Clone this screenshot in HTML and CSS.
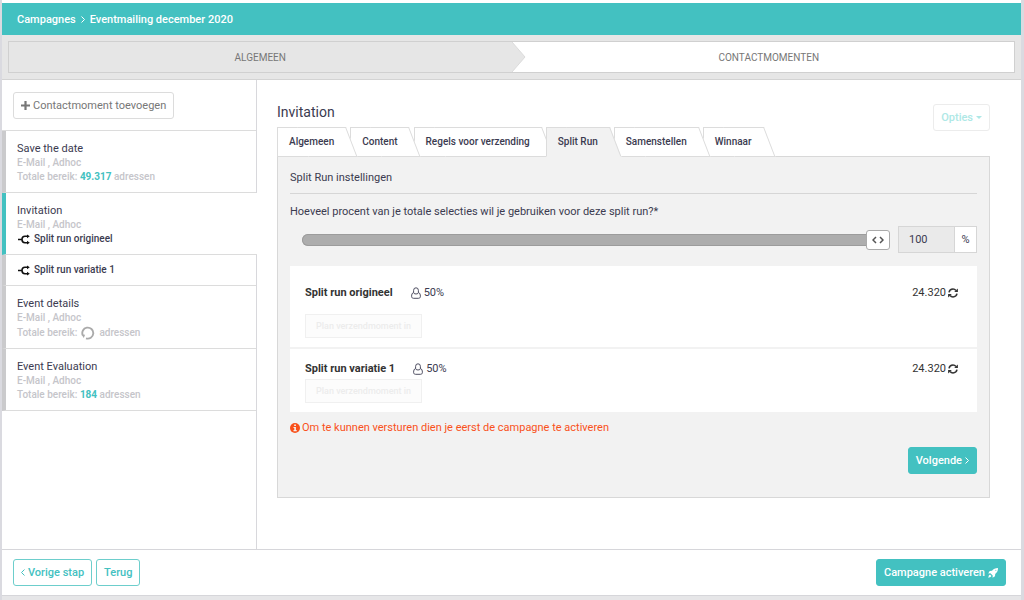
FILE: index.html
```html
<!DOCTYPE html>
<html lang="nl">
<head>
<meta charset="utf-8">
<meta name="viewport" content="width=device-width, initial-scale=1">
<title>Eventmailing december 2020</title>
<link rel="stylesheet" href="styles.css">
</head>
<body>
<svg class="defs" aria-hidden="true">
  <symbol id="split" viewBox="0 0 12 11"><path d="M0 5.500h4C4 3.400 5 2.300 7 2.300h3M4 5.500C4 7.600 5 8.700 7 8.700h3" fill="none" stroke="currentColor" stroke-width="1.600"/><path d="M9 .4 11.800 2.300 9 4.200zM9 6.800 11.800 8.700 9 10.600z" fill="currentColor"/></symbol>
  <symbol id="user" viewBox="0 0 10 12"><path d="M2.600 5.400V3.400a2.400 2.600 0 0 1 4.800 0v2a2.400 1.600 0 0 1-4.800 0z" fill="none" stroke="currentColor" stroke-width=".9"/><path d="M2.600 5.200C1.200 6 .6 7.600.6 9.300c0 1.500.9 2 2 2h4.800c1.100 0 2-.5 2-2 0-1.700-.6-3.300-2-4.100" fill="none" stroke="currentColor" stroke-width=".9"/></symbol>
  <symbol id="sync" viewBox="0 0 10 10"><path d="M1 4.300C1.400 2.200 3 1.100 5 1.100c1.300 0 2.300.5 3 1.300M9 5.700C8.600 7.800 7 8.900 5 8.900c-1.300 0-2.300-.5-3-1.300" fill="none" stroke="currentColor" stroke-width="1.500"/><path d="M9.900.4v3.700H6.200zM.1 9.600V5.900h3.700z" fill="currentColor"/></symbol>
</svg>

<div class="app">
  <header class="crumbs">
    <a href="#">Campagnes</a>
    <svg width="4" height="7" viewBox="0 0 4 7"><path d="M.5.5 3.500 3.500.5 6.500" fill="none" stroke="currentColor"/></svg>
    <a href="#">Eventmailing december 2020</a>
  </header>

  <nav class="steps-band">
    <div class="steps">
      <a class="step done" href="#">ALGEMEEN
        <svg class="arrow" viewBox="0 0 14 31" preserveAspectRatio="none"><path d="M0 0 13 15.500 0 31z" fill="#e6e6e6"/><path d="M0 0 13 15.500 0 31" fill="none" stroke="#dadada"/></svg>
      </a>
      <a class="step current" href="#">CONTACTMOMENTEN</a>
    </div>
  </nav>

  <div class="columns">
    <aside class="sidebar">
      <div class="add-row">
        <button class="btn btn-plain" type="button"><svg width="9" height="9" viewBox="0 0 9 9"><path d="M4.500 0v9M0 4.500h9" stroke="currentColor" stroke-width="2.200"/></svg>Contactmoment toevoegen</button>
      </div>
      <a class="moment" href="#">
        <span class="name">Save the date</span>
        <span>E-Mail , Adhoc</span>
        <span>Totale bereik: <b>49.317</b> adressen</span>
      </a>
      <a class="moment active" href="#">
        <span class="name">Invitation</span>
        <span>E-Mail , Adhoc</span>
        <span class="run"><svg width="12" height="11"><use href="#split"/></svg>Split run origineel</span>
      </a>
      <a class="moment variant" href="#">
        <span class="run"><svg width="12" height="11"><use href="#split"/></svg>Split run variatie 1</span>
      </a>
      <a class="moment" href="#">
        <span class="name">Event details</span>
        <span>E-Mail , Adhoc</span>
        <span class="loading">Totale bereik: <svg width="14" height="14" viewBox="0 0 14 14"><path d="M1.800 9.400A5.500 5.500 0 1 1 5 12.300" fill="none" stroke="#aaa" stroke-width="1.900"/><path d="M.5 8.500l3.600.3-1.300 3.200z" fill="#aaa"/></svg> adressen</span>
      </a>
      <a class="moment" href="#">
        <span class="name">Event Evaluation</span>
        <span>E-Mail , Adhoc</span>
        <span>Totale bereik: <b>184</b> adressen</span>
      </a>
    </aside>

    <main class="content">
      <div class="title-row">
        <h1>Invitation</h1>
        <button class="btn btn-options" type="button">Opties<svg width="6" height="3" viewBox="0 0 6 3"><path d="M0 0h6L3 3z" fill="currentColor"/></svg></button>
      </div>
      <div class="tabs" role="tablist">
        <button class="tab" role="tab" type="button">Algemeen</button>
        <button class="tab" role="tab" type="button">Content</button>
        <button class="tab" role="tab" type="button">Regels voor verzending</button>
        <button class="tab selected" role="tab" type="button" aria-selected="true">Split Run</button>
        <button class="tab" role="tab" type="button">Samenstellen</button>
        <button class="tab" role="tab" type="button">Winnaar</button>
      </div>
      <section class="panel">
        <h2>Split Run instellingen</h2>
        <label class="question" for="share">Hoeveel procent van je totale selecties wil je gebruiken voor deze split run?*</label>
        <div class="share-row">
          <input class="slider" id="share" type="range" min="0" max="100" value="100">
          <div class="amount">
            <input type="text" value="100" aria-label="Percentage" readonly>
            <span>%</span>
          </div>
        </div>

        <div class="runs">
          <article class="run-card original">
            <div class="run-head">
              <strong>Split run origineel</strong>
              <span class="portion"><svg width="10" height="12"><use href="#user"/></svg>50%</span>
              <span class="count">24.320<svg width="10" height="10"><use href="#sync"/></svg></span>
            </div>
            <button class="plan" type="button" disabled>Plan verzendmoment in</button>
          </article>
          <article class="run-card">
            <div class="run-head">
              <strong>Split run variatie 1</strong>
              <span class="portion"><svg width="10" height="12"><use href="#user"/></svg>50%</span>
              <span class="count">24.320<svg width="10" height="10"><use href="#sync"/></svg></span>
            </div>
            <button class="plan" type="button" disabled>Plan verzendmoment in</button>
          </article>
        </div>

        <p class="notice"><svg width="10" height="10" viewBox="0 0 10 10"><circle cx="5" cy="5" r="5" fill="currentColor"/><path d="M4.200 1.500h1.700v1.400H4.200zM3.500 3.900h2.400v3.200h.8v1.200H3.500V7.100h.8v-2h-.8z" fill="#f2f2f2"/></svg>Om te kunnen versturen dien je eerst de campagne te activeren</p>
        <div class="next-row">
          <button class="btn btn-primary" type="button">Volgende<svg width="4" height="7" viewBox="0 0 4 7"><path d="M.5.5 3.500 3.500.5 6.500" fill="none" stroke="currentColor"/></svg></button>
        </div>
      </section>
    </main>
  </div>

  <footer class="actions">
    <button class="btn btn-outline" type="button"><svg width="4" height="7" viewBox="0 0 4 7"><path d="M3.500.5.5 3.500 3.500 6.500" fill="none" stroke="currentColor"/></svg>Vorige stap</button>
    <button class="btn btn-outline" type="button">Terug</button>
    <button class="btn btn-primary activate" type="button">Campagne activeren<svg width="10" height="10" viewBox="0 0 10 10"><path d="M10 0C7.200 0 5.500.9 4 2.800L1.700 3 .2 5.400l2.200-.1 2.300 2.300-.1 2.200L7 8.300 7.200 6C9.100 4.500 10 2.800 10 0z" fill="currentColor"/><path d="M2 6.600.9 7.400.2 9.800l2.400-.7L3.400 8z" fill="currentColor"/><circle cx="7.800" cy="2.200" r=".5" fill="#43c1c1"/></svg></button>
  </footer>
</div>
</body>
</html>
```
FILE: styles.css
```css
* { box-sizing: border-box; }

body {
  margin: 0;
  background: #e6e6e8;
  color: #3b3b50;
  font: 11px/14px Roboto, "Liberation Sans", sans-serif;
}

button, input { font: inherit; color: inherit; margin: 0; }
a { color: inherit; text-decoration: none; }
h1, h2, p { margin: 0; font-weight: 400; }
svg { flex: none; }
.defs { position: absolute; width: 0; height: 0; }

.app {
  display: flex;
  flex-direction: column;
  min-height: 100vh;
  padding-bottom: 4px;
  border: solid #dadae0;
  border-width: 0 3px 0 2px;
}

.crumbs {
  display: flex;
  align-items: center;
  gap: 5px;
  height: 35px;
  padding: 1px 15px 0;
  border-top: 3px solid #fff;
  background: #43c1c1;
  color: #fff;
  font-weight: 500;
}

.steps-band {
  padding: 6px 6px;
  border-bottom: 1px solid #d3d3d3;
  background: #e6e6e6;
}

.steps {
  display: grid;
  grid-template-columns: 1fr 1fr;
  height: 32px;
  border: 1px solid #d0d0d0;
  color: #777;
  font-size: 10px;
}

.step { position: relative; display: flex; align-items: center; justify-content: center; padding-top: 1px; }
.step.current { background: #fff; padding-left: 12px; }
.step.done { z-index: 1; }
.arrow { position: absolute; left: 100%; top: 0; width: 14px; height: 100%; }

.columns { display: flex; flex: 1; background: #fff; }

.sidebar { flex: none; width: 255px; border-right: 1px solid #d8d8dc; }
.add-row { padding: 12px 11px 11px; border-bottom: 1px solid #dcdcdc; }

.btn {
  display: inline-flex;
  align-items: center;
  gap: 3px;
  height: 27px;
  padding: 0 7px;
  border: 1px solid;
  border-radius: 3px;
  background: #fff;
  font-weight: 500;
  white-space: nowrap;
}
.btn-plain { border-color: #dcdcdc; color: #777; font-weight: 400; }
.btn-options { border-color: #ececec; color: #aee8e6; }
.btn-primary { border-color: #43c1c1; background: #43c1c1; color: #fff; }
.btn-outline { border-color: #6dcecc; color: #43c1c1; }

.moment {
  display: flex;
  flex-direction: column;
  padding: 11px 11px 8px;
  border-left: 4px solid #cacacc;
  border-bottom: 1px solid #dcdcdc;
  background: #fff;
  color: #c5c5ca;
  font-size: 10px;
  font-weight: 500;
}
.moment .name { color: #3b3b50; font-size: 11px; font-weight: 400; }
.moment .run { color: #3b3b50; }
.moment b { color: #43c1c1; font-weight: 700; }
.moment.active { margin-right: -1px; border-left-color: #43c1c1; }
.moment.variant { padding: 8px 11px; }
.run { display: flex; align-items: center; gap: 4px; }
.run svg { color: #111; margin-left: 1px; }
.loading { display: flex; align-items: center; gap: 4px; line-height: 15px; }

.content { flex: 1; min-width: 0; padding: 24px 31px 0 20px; }

.title-row { display: flex; align-items: flex-start; justify-content: space-between; height: 23px; }
h1 { font-size: 14px; line-height: 16px; }

.tabs { display: flex; position: relative; z-index: 1; margin-bottom: -1px; }
.tab {
  position: relative;
  isolation: isolate;
  height: 30px;
  padding: 0 16px 0 12px;
  border: 0;
  background: none;
  font-size: 10px;
  font-weight: 500;
  white-space: nowrap;
}
.tab:nth-child(1) { z-index: 6; }
.tab:nth-child(2) { z-index: 5; }
.tab:nth-child(3) { z-index: 4; }
.tab:nth-child(5) { z-index: 2; }
.tab:nth-child(6) { z-index: 1; }
.tab.selected { z-index: 7; }
.tab::before, .tab::after {
  content: "";
  position: absolute;
  z-index: -1;
  top: 0;
  bottom: 0;
  border: solid #dcdcdc;
  background: #fff;
}
.tab::before { left: 0; right: 16px; border-width: 1px 0 1px 1px; }
.tab::after {
  left: 20px;
  right: 4px;
  border-width: 1px 1px 1px 0;
  transform: skewX(21deg);
  transform-origin: top right;
}
.tab.selected::before, .tab.selected::after { background: #f2f2f2; border-bottom-color: #f2f2f2; }

.panel { padding: 14px 12px 23px; border: 1px solid #d8d8d8; background: #f2f2f2; }
h2 { padding-bottom: 8px; border-bottom: 1px solid #d6d6d6; font-size: 11px; line-height: 14px; }
.question { display: block; padding: 11px 0 7px; }

.share-row { display: flex; align-items: center; gap: 8px; padding-left: 12px; }
.slider {
  flex: 1;
  min-width: 0;
  height: 20px;
  appearance: none;
  background: none;
}
.slider::-webkit-slider-runnable-track {
  height: 12px;
  border-radius: 6px;
  background: #adadad;
  box-shadow: inset 0 0 0 1px #9c9c9c;
}
.slider::-webkit-slider-thumb {
  appearance: none;
  width: 24px;
  height: 20px;
  margin-top: -4px;
  border: 1px solid #aaa;
  border-radius: 3px;
  background: #fff url("data:image/svg+xml,%3Csvg xmlns='http://www.w3.org/2000/svg' width='12' height='8' viewBox='0 0 12 8'%3E%3Cpath d='M4 1 1 4l3 3M8 1l3 3-3 3' fill='none' stroke='%23555' stroke-width='1.500'/%3E%3C/svg%3E") center no-repeat;
}

.amount { display: flex; width: 79px; height: 27px; border: 1px solid #d6d6d6; background: #fff; }
.amount input { flex: 1; min-width: 0; padding: 0 10px; border: 0; border-right: 1px solid #d6d6d6; background: #eaeaea; }
.amount span { width: 21px; align-self: center; text-align: center; }

.runs { display: grid; gap: 2px; margin-top: 13px; }
.run-card { padding: 13px 19px 9px 15px; background: #fff; }
.run-card.original { padding-top: 20px; }
.run-head { display: flex; align-items: center; }
.run-head strong { color: #333; font-weight: 700; }
.portion { display: flex; align-items: center; gap: 3px; margin-left: 18px; }
.count { display: flex; align-items: center; gap: 2px; margin-left: auto; color: #333; }
.plan {
  display: block;
  height: 24px;
  margin-top: 3px;
  padding: 0 10px;
  border: 1px solid #f0f0f0;
  background: #fcfcfc;
  color: #ececec;
  font-size: 9px;
  font-weight: 500;
}
.original .plan { margin-top: 14px; }

.notice { display: flex; align-items: center; gap: 2px; padding: 9px 0 12px; color: #f9511b; }
.next-row { display: flex; justify-content: flex-end; }

.actions {
  display: flex;
  align-items: center;
  gap: 4px;
  height: 47px;
  padding: 0 15px 0 11px;
  border: solid #d6d6da;
  border-width: 1px 0;
  background: #fff;
}
.activate { margin-left: auto; }
```
